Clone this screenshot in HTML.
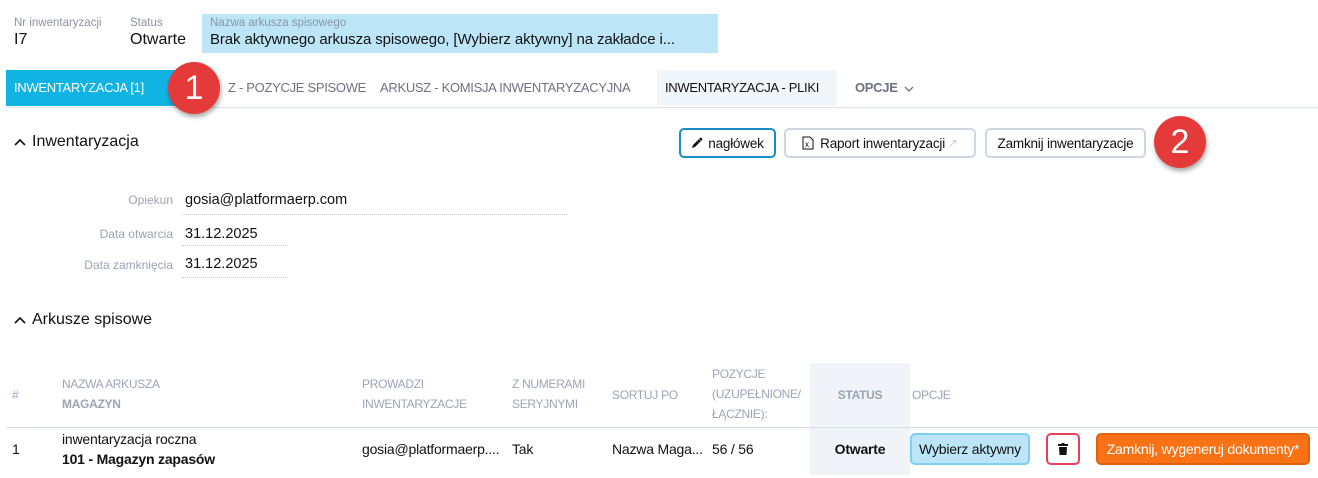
<!DOCTYPE html>
<html><head><meta charset="utf-8"><style>
*{margin:0;padding:0;box-sizing:border-box}
body{width:1318px;height:478px;background:#fff;font-family:"Liberation Sans",sans-serif;color:#111;position:relative;overflow:hidden}
.a{position:absolute;white-space:nowrap}
.lbl{font-size:11.5px;color:#8a94a3}
.tab{font-size:13px;color:#6b7280;letter-spacing:-0.3px;top:80px}
.btn{position:absolute;border:2px solid #cdd6e1;border-radius:5px;font-size:13.5px;display:flex;align-items:center;justify-content:center;background:#fff;letter-spacing:-0.2px}
.circ{position:absolute;width:52px;height:52px;border-radius:50%;background:#e53a3a;color:#fff;font-size:34px;display:flex;align-items:center;justify-content:center;box-shadow:1px 3px 5px rgba(0,0,0,.35)}
.fl{font-size:12px;color:#9aa3b2;text-align:right;width:173px;left:0}
.fv{font-size:14.5px;left:185px}
.dot{position:absolute;left:182px;border-top:1px dotted #c8c8c8;height:0}
.th{font-size:12px;color:#9aa5b5;line-height:20px;letter-spacing:-0.3px}
.td{font-size:14px;letter-spacing:-0.2px}
.chev{display:inline-block;margin-right:6px;vertical-align:middle}
</style></head><body>
<div class="a lbl" style="left:14px;top:17px">Nr inwentaryzacji</div>
<div class="a" style="left:14px;top:31px;font-size:16px">I7</div>
<div class="a lbl" style="left:130px;top:17px">Status</div>
<div class="a" style="left:130px;top:31px;font-size:16px">Otwarte</div>
<div class="a" style="left:202px;top:14px;width:516px;height:39px;background:#bde5f8"></div>
<div class="a lbl" style="left:210px;top:17px">Nazwa arkusza spisowego</div>
<div class="a" style="left:210px;top:31px;font-size:15px;letter-spacing:-0.1px">Brak aktywnego arkusza spisowego, [Wybierz aktywny] na zakładce i...</div>

<div class="a" style="left:6px;top:70px;width:184px;height:36px;background:#10b3e2"></div>
<div class="a tab" style="left:14px;color:#fff">INWENTARYZACJA [1]</div>
<div class="a tab" style="left:228px">Z - POZYCJE SPISOWE</div>
<div class="a tab" style="left:380px">ARKUSZ - KOMISJA INWENTARYZACYJNA</div>
<div class="a" style="left:657px;top:70px;width:180px;height:36px;background:#f1f6fb"></div>
<div class="a tab" style="left:665px;color:#111">INWENTARYZACJA - PLIKI</div>
<div class="a tab" style="left:855px;font-weight:bold">OPCJE <svg width="10" height="6" viewBox="0 0 10 6" style="margin-left:3px;vertical-align:middle"><path d="M1 1 L5 5 L9 1" fill="none" stroke="#6b7280" stroke-width="1.3"/></svg></div>
<div class="a" style="left:6px;top:107px;width:1312px;height:1px;background:#dde3ea"></div>
<div class="circ" style="left:168px;top:62px">1</div>

<div class="a" style="left:14px;top:133px;font-size:16px"><svg class="chev" width="12" height="8" viewBox="0 0 12 8"><path d="M1 7 L6 2 L11 7" fill="none" stroke="#111" stroke-width="1.6"/></svg>Inwentaryzacja</div>
<div class="btn" style="left:679px;top:128px;width:97px;height:30px;border-color:#1b8cc8">
<svg width="12" height="12" viewBox="0 0 12 12" style="margin-right:5px"><path d="M1 11 L2 8 L8 2 L10 4 L4 10 Z" fill="#111"/><path d="M9 1 L11 3" stroke="#111" stroke-width="2"/></svg>nagłówek</div>
<div class="btn" style="left:784px;top:128px;width:192px;height:30px">
<svg width="12" height="14" viewBox="0 0 12 14" style="margin-right:6px"><path d="M1 1 H8 L11 4 V13 H1 Z" fill="none" stroke="#111"/><text x="3" y="11" font-size="8" font-family="Liberation Sans">x</text></svg>Raport inwentaryzacji <span style="color:#ccc;margin-left:3px;font-size:12px">&#8599;</span></div>
<div class="btn" style="left:985px;top:128px;width:161px;height:30px">Zamknij inwentaryzacje</div>
<div class="circ" style="left:1154px;top:116px">2</div>

<div class="a fl" style="top:193px">Opiekun</div>
<div class="a fv" style="top:192px">gosia@platformaerp.com</div>
<div class="dot" style="top:214px;width:385px"></div>
<div class="a fl" style="top:227px">Data otwarcia</div>
<div class="a fv" style="top:226px">31.12.2025</div>
<div class="dot" style="top:245px;width:106px"></div>
<div class="a fl" style="top:258px">Data zamknięcia</div>
<div class="a fv" style="top:256px">31.12.2025</div>
<div class="dot" style="top:277px;width:106px"></div>

<div class="a" style="left:14px;top:311px;font-size:16px"><svg class="chev" width="12" height="8" viewBox="0 0 12 8"><path d="M1 7 L6 2 L11 7" fill="none" stroke="#111" stroke-width="1.6"/></svg>Arkusze spisowe</div>

<div class="a" style="left:810px;top:363px;width:100px;height:112px;background:#f0f3f7"></div>
<div class="a th" style="left:12px;top:385px">#</div>
<div class="a th" style="left:62px;top:374px">NAZWA ARKUSZA<br><b>MAGAZYN</b></div>
<div class="a th" style="left:362px;top:374px">PROWADZI<br>INWENTARYZACJE</div>
<div class="a th" style="left:512px;top:374px">Z NUMERAMI<br>SERYJNYMI</div>
<div class="a th" style="left:612px;top:385px">SORTUJ PO</div>
<div class="a th" style="left:712px;top:364px">POZYCJE<br>(UZUPEŁNIONE/<br>ŁĄCZNIE):</div>
<div class="a th" style="left:810px;width:100px;text-align:center;top:385px;font-weight:bold">STATUS</div>
<div class="a th" style="left:912px;top:385px">OPCJE</div>
<div class="a" style="left:6px;top:427px;width:1312px;height:1px;background:#d6dde6"></div>

<div class="a td" style="left:12px;top:441px">1</div>
<div class="a td" style="left:62px;top:431px">inwentaryzacja roczna</div>
<div class="a td" style="left:62px;top:451px;font-weight:bold">101 - Magazyn zapasów</div>
<div class="a td" style="left:362px;top:441px">gosia@platformaerp....</div>
<div class="a td" style="left:512px;top:441px">Tak</div>
<div class="a td" style="left:612px;top:441px">Nazwa Maga...</div>
<div class="a td" style="left:712px;top:441px">56 / 56</div>
<div class="a td" style="left:810px;width:100px;text-align:center;top:441px;font-weight:bold">Otwarte</div>
<div class="btn" style="left:910px;top:433px;width:120px;height:32px;background:#bde5f8;border-color:#7fcff3;font-size:14px">Wybierz aktywny</div>
<div class="btn" style="left:1046px;top:433px;width:34px;height:32px;border-color:#e8405a">
<svg width="10" height="12" viewBox="0 0 10 12"><rect x="0" y="1" width="10" height="2" fill="#111"/><rect x="3.5" y="0" width="3" height="2" fill="#111"/><path d="M1 4 H9 L8.5 12 H1.5 Z" fill="#111"/></svg></div>
<div class="btn" style="left:1096px;top:433px;width:214px;height:32px;background:#f97316;border-color:#e0620e;color:#fff;font-size:14px">Zamknij, wygeneruj dokumenty*</div>
</body></html>
